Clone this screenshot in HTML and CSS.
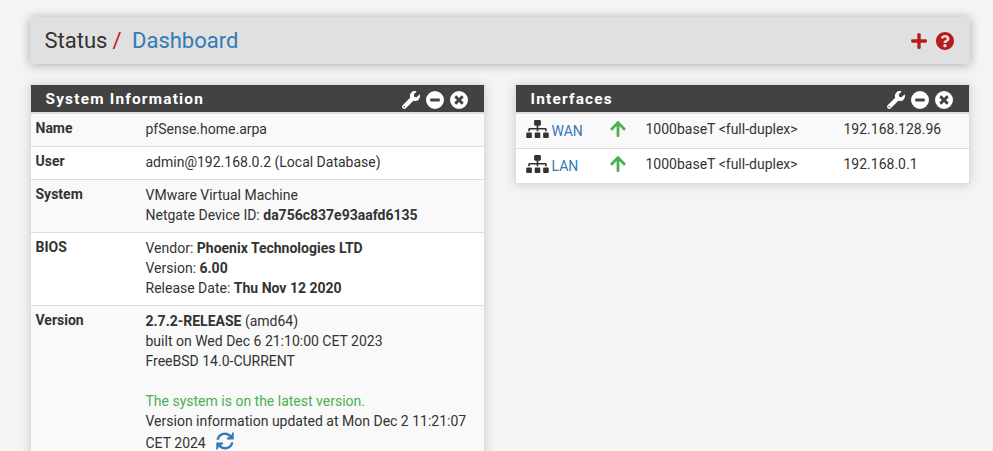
FILE: index.html
```html
<!DOCTYPE html>
<html lang="en">
<head>
<meta charset="utf-8">
<title>Status: Dashboard</title>
<link rel="stylesheet" href="styles.css">
</head>
<body>
<svg class="sprite" aria-hidden="true">
  <symbol id="wrench" viewBox="0 0 512 512"><path d="M507.7 109.100c-2.200-9-13.500-12.100-20.100-5.500l-74.400 74.400-67.900-11.300L334 98.900l74.400-74.400c6.600-6.600 3.400-17.900-5.700-20.200-47.400-11.700-99.600.9-136.600 37.900-39.600 39.600-50.500 97.100-34.100 147.200L18.700 402.800c-25 25-25 65.500 0 90.500s65.500 25 90.500 0l213.200-213.200c50.100 16.700 107.500 5.700 147.400-34.200 37.100-37.100 49.700-89.300 37.900-136.800zM64 472c-13.200 0-24-10.800-24-24s10.800-24 24-24 24 10.800 24 24-10.700 24-24 24z"/></symbol>
  <symbol id="minus" viewBox="8 8 496 496"><path fill-rule="evenodd" d="M256 8a248 248 0 1 0 0 496a248 248 0 1 0 0-496zM136 216H376c7 0 12 5 12 12v56c0 7-5 12-12 12H136c-7 0-12-5-12-12v-56c0-7 5-12 12-12z"/></symbol>
  <symbol id="xmark" viewBox="8 8 496 496"><path fill-rule="evenodd" d="M256 8a248 248 0 1 0 0 496a248 248 0 1 0 0-496zM377.600 321.100c4.700 4.700 4.700 12.300 0 17L338 377.600c-4.700 4.700-12.300 4.700-17 0L256 312l-65.100 65.600c-4.700 4.700-12.300 4.700-17 0L134.400 338c-4.700-4.700-4.700-12.300 0-17l65.600-65-65.600-65.100c-4.700-4.700-4.700-12.300 0-17l39.600-39.600c4.700-4.700 12.300-4.700 17 0l65 65.700 65.100-65.600c4.700-4.700 12.300-4.700 17 0l39.600 39.600c4.700 4.700 4.700 12.300 0 17L312 256z"/></symbol>
  <symbol id="plus" viewBox="0 0 448 512"><path d="M416 208H272V64c0-17.670-14.330-32-32-32h-32c-17.670 0-32 14.330-32 32v144H32c-17.670 0-32 14.330-32 32v32c0 17.670 14.330 32 32 32h144v144c0 17.670 14.330 32 32 32h32c17.670 0 32-14.330 32-32V304h144c17.670 0 32-14.330 32-32v-32c0-17.670-14.330-32-32-32z"/></symbol>
  <symbol id="question" viewBox="8 8 496 496"><path fill-rule="evenodd" d="M504 256c0 136.997-111.043 248-248 248S8 392.997 8 256C8 119.083 119.043 8 256 8s248 111.083 248 248zM262.655 90c-54.497 0-89.255 22.957-116.549 63.758-3.536 5.286-2.353 12.415 2.715 16.258l34.699 26.310c5.205 3.947 12.621 3.008 16.665-2.122 17.864-22.658 30.113-35.797 57.303-35.797 20.429 0 45.698 13.148 45.698 32.958 0 14.976-12.363 22.667-32.534 33.976C247.128 238.528 216 254.941 216 296v4c0 6.627 5.373 12 12 12h56c6.627 0 12-5.373 12-12v-1.333c0-28.462 83.186-29.647 83.186-106.667 0-58.002-60.165-102-116.531-102zM256 338c-25.365 0-46 20.635-46 46 0 25.364 20.635 46 46 46s46-20.636 46-46c0-25.365-20.635-46-46-46z"/></symbol>
  <symbol id="sitemap" viewBox="0 0 640 512"><path d="M128 352H32c-17.670 0-32 14.330-32 32v96c0 17.670 14.330 32 32 32h96c17.670 0 32-14.330 32-32v-96c0-17.670-14.330-32-32-32zm-24-80h192v48h48v-48h192v48h48v-57.590c0-21.170-17.230-38.410-38.410-38.410H344v-64h40c17.670 0 32-14.330 32-32V32c0-17.670-14.330-32-32-32H256c-17.670 0-32 14.330-32 32v96c0 17.670 14.330 32 32 32h40v64H94.410C73.230 224 56 241.230 56 262.410V320h48v-48zm264 80h-96c-17.670 0-32 14.330-32 32v96c0 17.670 14.330 32 32 32h96c17.670 0 32-14.330 32-32v-96c0-17.670-14.330-32-32-32zm240 0h-96c-17.670 0-32 14.330-32 32v96c0 17.670 14.330 32 32 32h96c17.670 0 32-14.330 32-32v-96c0-17.670-14.330-32-32-32z"/></symbol>
  <symbol id="arrow" viewBox="0 0 448 512"><path d="M34.900 289.500l-22.200-22.200c-9.400-9.400-9.400-24.600 0-33.900L207 39c9.400-9.400 24.600-9.400 33.900 0l194.300 194.300c9.400 9.400 9.400 24.600 0 33.900L413 289.400c-9.500 9.500-25 9.300-34.300-.4L264 168.600V456c0 13.300-10.700 24-24 24h-32c-13.300 0-24-10.700-24-24V168.600L69.200 289.100c-9.300 9.800-24.800 10-34.300.4z"/></symbol>
  <symbol id="refresh" viewBox="0 0 512 512"><path d="M16 222C32 100 132 16 256 16c66 0 126 26 170 68l30-30V12h48v204H310v-48l64-32c-32-32-72-50-118-50-87 0-158 58-171 136zM496 290C480 412 380 496 256 496c-66 0-126-26-170-68l-30 30v42H8V296h194v48l-64 32c32 32 72 50 118 50 87 0 158-58 171-136z"/></symbol>
</svg>
<header class="page-header">
  <h1>Status<span class="slash">/</span><a class="link">Dashboard</a></h1>
  <div class="header-actions">
    <svg class="plus"><use href="#plus"/></svg>
    <svg class="help"><use href="#question"/></svg>
  </div>
</header>
<main class="columns">
  <section class="panel">
    <div class="panel-heading">
      <h2>System Information</h2>
      <div class="tools"><svg><use href="#wrench"/></svg><svg><use href="#minus"/></svg><svg><use href="#xmark"/></svg></div>
    </div>
    <dl class="info">
      <div class="row"><dt>Name</dt><dd>pfSense.home.arpa</dd></div>
      <div class="row"><dt>User</dt><dd>admin@192.168.0.2 (Local Database)</dd></div>
      <div class="row"><dt>System</dt><dd>VMware Virtual Machine<br>Netgate Device ID: <b>da756c837e93aafd6135</b></dd></div>
      <div class="row"><dt>BIOS</dt><dd>Vendor: <b>Phoenix Technologies LTD</b><br>Version: <b>6.00</b><br>Release Date: <b>Thu Nov 12 2020</b></dd></div>
      <div class="row"><dt>Version</dt><dd><b>2.7.2-RELEASE</b> (amd64)<br>built on Wed Dec 6 21:10:00 CET 2023<br>FreeBSD 14.0-CURRENT<br><br><span class="ok">The system is on the latest version.</span><br>Version information updated at Mon Dec 2 11:21:07<div class="updated">CET 2024<svg class="refresh"><use href="#refresh"/></svg></div></dd></div>
    </dl>
  </section>
  <section class="panel">
    <div class="panel-heading">
      <h2>Interfaces</h2>
      <div class="tools"><svg><use href="#wrench"/></svg><svg><use href="#minus"/></svg><svg><use href="#xmark"/></svg></div>
    </div>
    <div class="interfaces">
      <div class="row"><div class="iface"><svg class="sitemap"><use href="#sitemap"/></svg><a class="link">WAN</a></div><svg class="up"><use href="#arrow"/></svg><span>1000baseT &lt;full-duplex&gt;</span><span>192.168.128.96</span></div>
      <div class="row"><div class="iface"><svg class="sitemap"><use href="#sitemap"/></svg><a class="link">LAN</a></div><svg class="up"><use href="#arrow"/></svg><span>1000baseT &lt;full-duplex&gt;</span><span>192.168.0.1</span></div>
    </div>
  </section>
</main>
</body>
</html>
```
FILE: styles.css
```css
* { box-sizing: border-box; }
html { height: 100%; overflow: hidden; }
body {
  margin: 0;
  padding: 17px 23px 0 30px;
  height: 100%;
  overflow: hidden;
  background: #f4f4f4;
  color: #333;
  font: 400 14px/20px Roboto, sans-serif;
}
svg { display: block; fill: currentColor; flex: none; }
.sprite { position: absolute; width: 0; height: 0; }
.link { color: #337ab7; }
.page-header {
  display: flex;
  align-items: center;
  justify-content: space-between;
  height: 47px;
  padding: 0 16px 0 14.500px;
  background: #e0e0e0;
  box-shadow: 0 1px 10px rgba(0, 0, 0, .3);
}
h1 { margin: 0; font-size: 22px; font-weight: 400; line-height: 28px; }
.slash { margin: 0 10.500px 0 5px; color: #b71c1c; }
.header-actions { display: flex; align-items: center; gap: 9px; padding-top: 1px; color: #b71c1c; }
.plus { width: 16px; height: 18px; }
.help { width: 18px; height: 18px; }
.columns { display: grid; grid-template-columns: 455px 455px; gap: 30px; align-items: start; margin-top: 20px; }
.panel { border: 1px solid #ddd; background: #fff; box-shadow: 0 1px 10px rgba(0, 0, 0, .15); }
.panel-heading {
  display: flex;
  align-items: center;
  justify-content: space-between;
  height: 28px;
  padding: 0 16.500px 0 14.500px;
  background: #424242;
  color: #fff;
  border-bottom: 1px solid #ddd;
}
h2 { margin: 0; font-size: 15.400px; font-weight: 700; line-height: 20px; letter-spacing: 1.200px; }
.tools { display: flex; gap: 6px; padding-top: 2px; }
.tools svg { width: 18px; height: 18px; }
.info { margin: 0; }
.row { border-top: 1px solid #ddd; }
.row:nth-child(odd) { background: #f9f9f9; }
.info .row { display: grid; grid-template-columns: 110px 1fr; padding: 5px 5px 7px 4.500px; }
dt { font-weight: 700; line-height: 18px; }
dd { margin: 0; }
b { font-weight: 700; }
.ok { color: #4caf50; }
.updated { display: flex; align-items: center; height: 24px; }
.refresh { width: 18px; height: 18px; margin-left: 10px; margin-top: -4px; color: #337ab7; }
.interfaces .row { display: grid; grid-template-columns: 84px 36px 198px 1fr; align-items: start; height: 35px; padding: 5px 0 0 9.500px; }
.iface { display: flex; align-items: center; gap: 3px; height: 20px; }
.iface .link { padding-top: 3px; }
.sitemap { width: 23px; height: 18px; }
.up { width: 16px; height: 18px; margin-top: 1px; color: #4caf50; }
```
